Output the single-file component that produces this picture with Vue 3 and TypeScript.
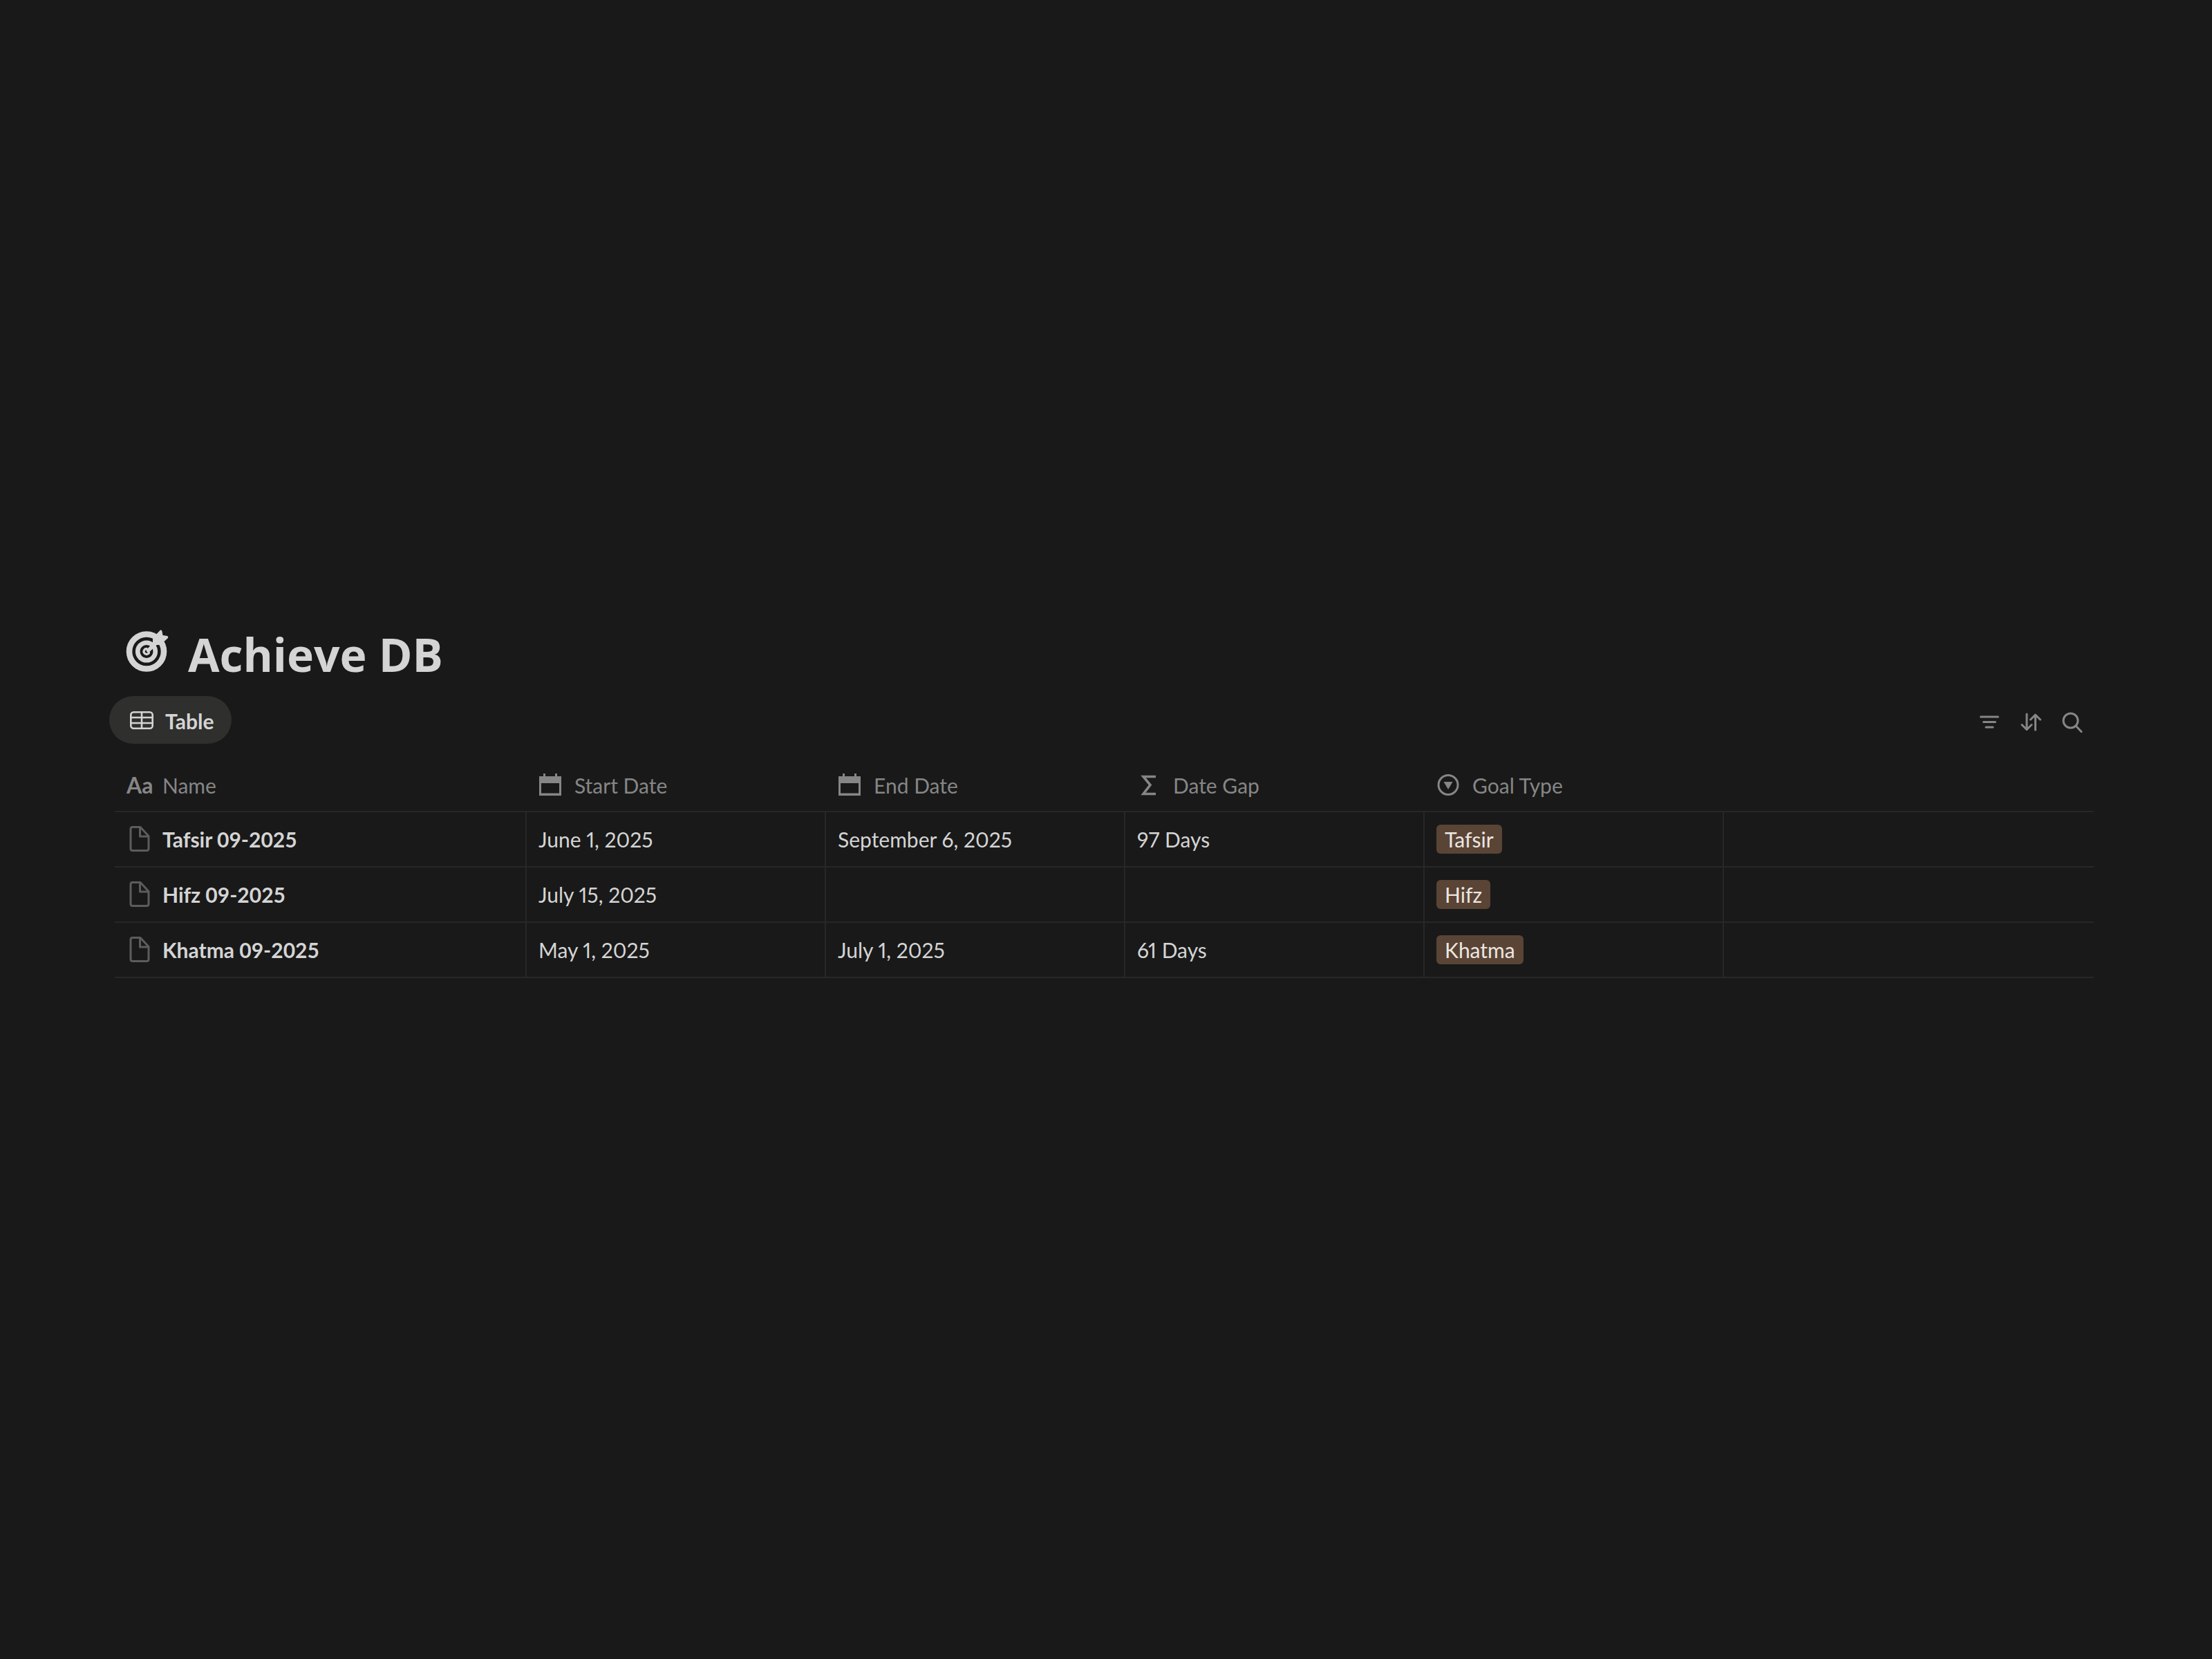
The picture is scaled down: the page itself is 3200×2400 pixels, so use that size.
<script setup lang="ts">
interface Goal {
  name: string
  start: string
  end: string
  gap: string
  type: string
}

const goals: Goal[] = [
  { name: 'Tafsir 09-2025', start: 'June 1, 2025', end: 'September 6, 2025', gap: '97 Days', type: 'Tafsir' },
  { name: 'Hifz 09-2025', start: 'July 15, 2025', end: '', gap: '', type: 'Hifz' },
  { name: 'Khatma 09-2025', start: 'May 1, 2025', end: 'July 1, 2025', gap: '61 Days', type: 'Khatma' },
]
</script>

<template>
  <main class="page">
    <header class="title-row">
      <svg class="target" viewBox="0 0 62 62" aria-hidden="true">
        <circle cx="30" cy="31.500" r="25" fill="none" stroke="currentColor" stroke-width="8.600" />
        <circle cx="30" cy="31.500" r="12.800" fill="none" stroke="currentColor" stroke-width="6.600" />
        <path d="M33.500 33.500A4 4 0 1 1 30 27.500" fill="none" stroke="currentColor" stroke-width="3.400" stroke-linecap="round" />
        <path d="M32.500 30L46 17" stroke="currentColor" stroke-width="5.500" stroke-linecap="round" />
        <path d="M39 12L50 .6Q52 0 52.400 2L53.500 8L60 9Q62 10 61 12L50 22H39Z" fill="currentColor" />
      </svg>
      <h1>Achieve DB</h1>
    </header>

    <nav class="bar" aria-label="Views">
      <button class="view" type="button">
        <svg class="grid-icon" viewBox="0 0 34 26" fill="none" stroke="currentColor" stroke-width="2.600" aria-hidden="true">
          <rect x="1.300" y="1.300" width="31.400" height="23.400" rx="4" />
          <path d="M2 9h30M2 17h30M17 2v22" />
        </svg>
        <span>Table</span>
      </button>
      <div class="tools">
        <button type="button" aria-label="Filter">
          <svg viewBox="0 0 30 30" aria-hidden="true"><path d="M2.500 7h25M6.500 14.500h17M10 22h10" /></svg>
        </button>
        <button type="button" aria-label="Sort">
          <svg viewBox="0 0 30 30" aria-hidden="true"><path d="M9 3v22M2 18.500l7 7 7-7M21.500 26V4M14.500 11l7-7 7 7" /></svg>
        </button>
        <button type="button" aria-label="Search">
          <svg viewBox="0 0 30 30" aria-hidden="true"><circle cx="12.500" cy="12.500" r="10.500" /><path d="M20 20l8 8.500" /></svg>
        </button>
      </div>
    </nav>

    <table>
      <colgroup>
        <col class="c-name"><col class="c-prop"><col class="c-prop"><col class="c-prop"><col class="c-prop"><col>
      </colgroup>
      <thead>
        <tr>
          <th scope="col"><div class="head"><span class="aa" aria-hidden="true">Aa</span>Name</div></th>
          <th v-for="label in ['Start Date', 'End Date']" :key="label" scope="col">
            <div class="head">
              <svg viewBox="0 0 34 34" aria-hidden="true"><path fill="currentColor" fill-rule="evenodd" d="M1 4h6V0h3v4h14V0h3v4h6v28H1ZM4 14v14.500h26V14Z" /></svg>
              {{ label }}
            </div>
          </th>
          <th scope="col">
            <div class="head">
              <svg viewBox="0 0 34 34" aria-hidden="true"><path d="M27 4.500H9l10 12L9 29.500h18" fill="none" stroke="currentColor" stroke-width="3.600" /></svg>
              Date Gap
            </div>
          </th>
          <th scope="col">
            <div class="head">
              <svg viewBox="0 0 34 34" aria-hidden="true"><circle cx="17" cy="16.500" r="14" fill="none" stroke="currentColor" stroke-width="3" /><path d="M10.500 12h13L17 23Z" fill="currentColor" /></svg>
              Goal Type
            </div>
          </th>
          <th></th>
        </tr>
      </thead>
      <tbody>
        <tr v-for="goal in goals" :key="goal.name">
          <td>
            <div class="name">
              <svg viewBox="0 0 30 38" fill="none" stroke="currentColor" stroke-width="3" stroke-linejoin="round" aria-hidden="true">
                <path d="M4.500 1.500H16L28 14.500v18q0 3-3 3H5q-3 0-3-3V4.500q0-3 2.500-3ZM15.500 1.500v13.500H28" />
              </svg>
              {{ goal.name }}
            </div>
          </td>
          <td>{{ goal.start }}</td>
          <td>{{ goal.end }}</td>
          <td>{{ goal.gap }}</td>
          <td><span class="tag">{{ goal.type }}</span></td>
          <td></td>
        </tr>
      </tbody>
    </table>
  </main>
</template>

<style>
body {
  margin: 0;
  background: #191919;
}
</style>

<style scoped>
.page {
  box-sizing: border-box;
  min-height: 100vh;
  padding: 904px 171px 0 166px;
  color: #d4d4d4;
  background: #191919;
  font-family: Lato, 'Noto Sans', sans-serif;
  font-size: 30px;
  font-variant-numeric: proportional-nums;
  line-height: 40px;
}
.title-row {
  display: flex;
  align-items: flex-start;
  gap: 28px;
  padding-left: 16px;
}
.target {
  width: 62px;
  height: 62px;
  margin-top: 7px;
}
h1 {
  margin: 0;
  font-family: 'Open Sans', 'Noto Sans', sans-serif;
  font-size: 66px;
  font-weight: 700;
  line-height: 84px;
}
.bar {
  display: flex;
  align-items: center;
  justify-content: space-between;
  margin-top: 19px;
}
button {
  font: inherit;
  color: inherit;
  border: 0;
  background: none;
}
.view {
  display: flex;
  align-items: center;
  gap: 17px;
  height: 69px;
  margin-left: -8px;
  padding: 0 26px 0 30px;
  border-radius: 35px;
  background: #2f2f2d;
  font-weight: 700;
}
.view span {
  padding-top: 2px;
}
.grid-icon {
  width: 34px;
  height: 26px;
}
.tools {
  display: flex;
  gap: 30px;
  padding: 6px 16px 0 0;
  color: #868686;
}
.tools button {
  width: 30px;
  height: 30px;
  padding: 0;
}
.tools svg {
  display: block;
  fill: none;
  stroke: currentColor;
  stroke-width: 3;
  stroke-linecap: round;
  stroke-linejoin: round;
}
table {
  width: 100%;
  margin-top: 23px;
  border-collapse: separate;
  border-spacing: 0;
  table-layout: fixed;
}
.c-name {
  width: 596px;
}
.c-prop {
  width: 433px;
}
th,
td {
  box-sizing: border-box;
  padding: 0 17px;
  border-bottom: 2px solid #272727;
  text-align: left;
  white-space: nowrap;
}
th {
  height: 76px;
  color: #868686;
  font-weight: 400;
}
td {
  height: 80px;
}
td:not(:last-child) {
  border-right: 2px solid #272727;
}
.head,
.name {
  display: flex;
  align-items: center;
}
.head svg {
  width: 34px;
  height: 34px;
  margin-right: 18px;
}
.aa {
  width: 52px;
  font-size: 32px;
  font-weight: 700;
}
.name {
  font-weight: 700;
  font-variant-numeric: tabular-nums;
}
.name svg {
  width: 30px;
  height: 38px;
  margin: 0 18px 0 4px;
  color: #5c5c5c;
}
.tag {
  display: inline-block;
  padding: 1px 12px;
  border-radius: 6px;
  background: #594436;
  color: #ece6e0;
}
</style>
